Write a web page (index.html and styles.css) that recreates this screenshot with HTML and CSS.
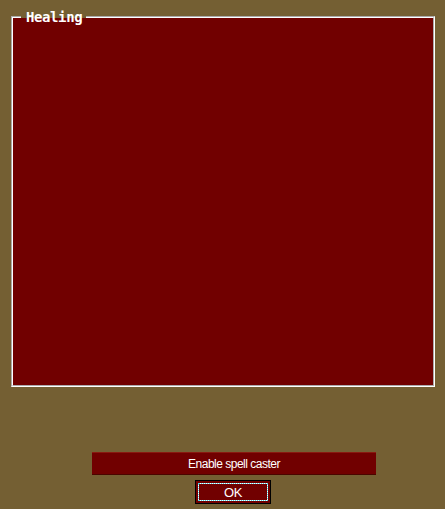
FILE: index.html
```html
<!DOCTYPE html>
<html>
<head>
<meta charset="utf-8">
<link rel="stylesheet" href="styles.css">
</head>
<body>
<main class="dialog">
  <fieldset class="group">
    <legend class="group-title">Healing</legend>
    <div class="pane"></div>
  </fieldset>
  <div class="actions">
    <button class="btn-wide" type="button">Enable spell caster</button>
    <button class="btn-ok" type="button">OK</button>
  </div>
</main>
</body>
</html>
```
FILE: styles.css
```css
html, body {
  margin: 0;
  padding: 0;
  background: #745f33;
}
body {
  width: 445px;
  height: 509px;
  overflow: hidden;
  font-family: "Liberation Sans", Arial, sans-serif;
}
.dialog {
  display: flex;
  flex-direction: column;
}
.group {
  margin: 16px 10px 0 11px;
  padding: 0 0 0 8px;
  border: 2px groove #ffffff;
  min-width: 0;
}
.group-title {
  height: 2px;
  line-height: 2px;
  padding: 0 4px 0 5px;
  font-family: "DejaVu Sans Mono", monospace;
  font-weight: bold;
  font-size: 14px;
  letter-spacing: -0.4px;
  color: #ffffff;
}
.pane {
  margin-left: -8px;
  height: 367px;
  background: #710000;
}
.actions {
  margin: 65px 0 0 92px;
  width: 284px;
  display: flex;
  flex-direction: column;
  gap: 5px;
}
.btn-wide {
  width: 284px;
  height: 23px;
  margin: 0;
  padding: 0;
  background: #710000;
  border: 0;
  border-top: 1px solid #8a1a10;
  border-bottom: 1px solid #4a0500;
  color: #ffffff;
  font-family: "Liberation Sans", Arial, sans-serif;
  font-size: 12px;
  letter-spacing: -0.5px;
}
.btn-ok {
  position: relative;
  align-self: flex-start;
  margin: 0 0 0 103px;
  width: 76px;
  height: 24px;
  padding: 0;
  background: #710000;
  border: 1px solid #000000;
  color: #ffffff;
  font-family: "Liberation Sans", Arial, sans-serif;
  font-size: 13px;
  letter-spacing: -0.5px;
}
.btn-ok::before,
.btn-ok::after {
  content: "";
  position: absolute;
  inset: 2px;
}
.btn-ok::before {
  border: 1px solid #ffffff;
}
.btn-ok::after {
  border: 1px dotted #4fd8e8;
}
```
